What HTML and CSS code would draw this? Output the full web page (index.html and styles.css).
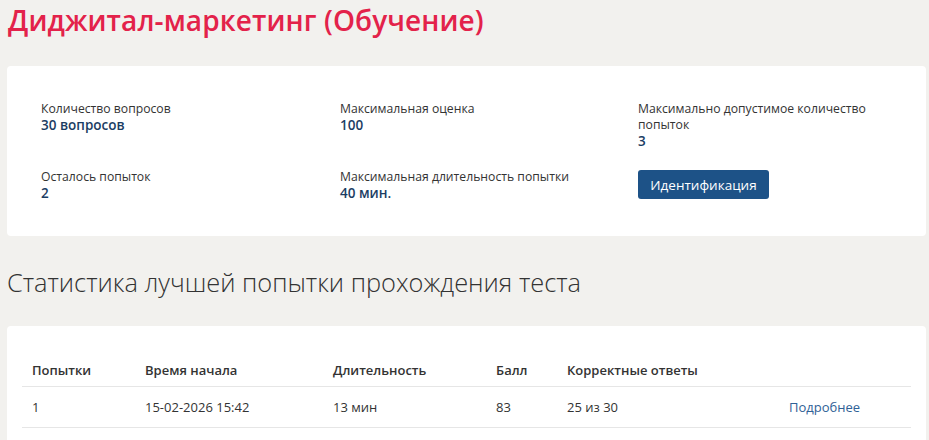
FILE: index.html
```html
<!DOCTYPE html>
<html lang="ru">
<head>
<meta charset="utf-8">
<link rel="stylesheet" href="styles.css">
</head>
<body>
<h1 class="title">Диджитал-маркетинг (Обучение)</h1>
<section class="card info">
  <div class="info-grid">
    <div class="item"><div class="label">Количество вопросов</div><div class="value">30 вопросов</div></div>
    <div class="item"><div class="label">Максимальная оценка</div><div class="value">100</div></div>
    <div class="item"><div class="label">Максимально допустимое количество попыток</div><div class="value">3</div></div>
    <div class="item"><div class="label">Осталось попыток</div><div class="value">2</div></div>
    <div class="item"><div class="label">Максимальная длительность попытки</div><div class="value">40 мин.</div></div>
    <div class="item"><button class="btn">Идентификация</button></div>
  </div>
</section>
<h2 class="subtitle">Статистика лучшей попытки прохождения теста</h2>
<section class="card stats">
  <table class="table">
    <thead>
      <tr><th class="c1">Попытки</th><th class="c2">Время начала</th><th class="c3">Длительность</th><th class="c4">Балл</th><th class="c5">Корректные ответы</th><th class="c6"></th></tr>
    </thead>
    <tbody>
      <tr><td>1</td><td>15-02-2026 15:42</td><td>13 мин</td><td>83</td><td>25 из 30</td><td><a class="link" href="#">Подробнее</a></td></tr>
    </tbody>
  </table>
</section>
</body>
</html>
```
FILE: styles.css
```css
html, body { margin: 0; padding: 0; }
body {
  background: #f2f1ee;
  font-family: "Open Sans", "Noto Sans", sans-serif;
  color: #333;
  padding: 0 3px 0 7px;
}
.title {
  margin: 0;
  padding: 0 0 0 1px;
  height: 64px;
  box-sizing: border-box;
  font-family: "Open Sans", sans-serif;
  font-weight: 600;
  font-size: 28px;
  line-height: 40px;
  color: #e3224a;
  letter-spacing: 0.1px;
}
.card {
  background: #fff;
  border-radius: 4px;
}
.info {
  margin-top: 2px;
  height: 170px;
  box-sizing: border-box;
  padding: 35px 20px 0 34px;
}
.info-grid {
  display: grid;
  grid-template-columns: 299px 298px 1fr;
  row-gap: 20px;
  align-items: start;
}
.item { max-width: 250px; }
.label {
  font-size: 12.2px;
  line-height: 16px;
  color: #333;
}
.value {
  font-size: 13.5px;
  font-weight: 600;
  line-height: 16px;
  color: #1b3d63;
}
.btn {
  display: block;
  margin-top: 1px;
  width: 131px;
  height: 29px;
  border: 0;
  border-radius: 3px;
  background: #1d5287;
  color: #fff;
  font-family: "Open Sans", sans-serif;
  font-size: 13.5px;
  font-weight: 500;
  padding: 0;
  cursor: pointer;
}
.subtitle {
  margin: 0;
  height: 90px;
  box-sizing: border-box;
  padding-top: 30px;
  font-family: "Open Sans", sans-serif;
  font-weight: 300;
  font-size: 25.4px;
  line-height: 32px;
  color: #333;
}
.stats {
  padding: 27px 15px 0 15px;
  height: 120px;
  box-sizing: border-box;
}
.table {
  width: 100%;
  border-collapse: collapse;
  font-size: 13px;
}
.table th {
  text-align: left;
  font-weight: 600;
  color: #333;
  padding: 8px 10px 7px 10px;
  line-height: 18px;
  border-bottom: 1px solid #e6e6e6;
}
.table td {
  padding: 11px 10px 10px 10px;
  line-height: 19px;
  color: #333;
  border-bottom: 1px solid #e6e6e6;
}
.c1 { width: 93px; }
.c2 { width: 168px; }
.c3 { width: 143px; }
.c4 { width: 51px; }
.c5 { width: 202px; }
.link { color: #2f6196; text-decoration: none; }
```
